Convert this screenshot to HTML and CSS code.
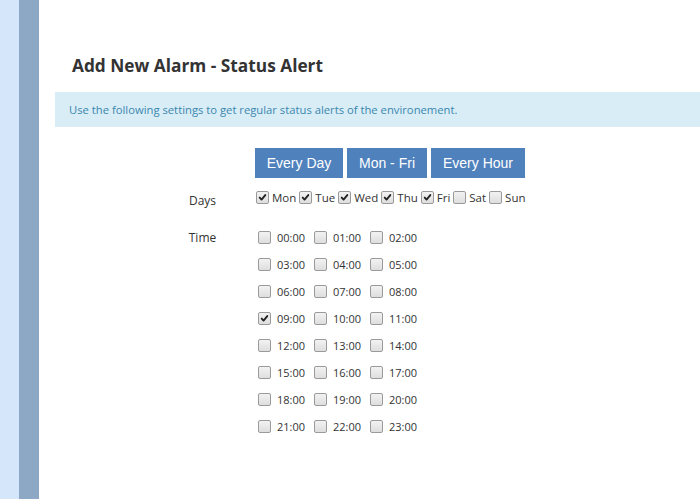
FILE: index.html
```html
<!DOCTYPE html>
<html>
<head>
<meta charset="utf-8">
<link rel="stylesheet" href="styles.css">
</head>
<body>
<div class="page">
  <div class="rail-light"></div>
  <div class="rail-dark"></div>
  <main class="main">
    <h1 class="title">Add New Alarm - Status Alert</h1>
    <div class="info">Use the following settings to get regular status alerts of the environement.</div>
    <div class="form">
      <div class="label"></div>
      <div class="buttons">
        <button class="btn">Every Day</button>
        <button class="btn">Mon - Fri</button>
        <button class="btn">Every Hour</button>
      </div>

      <div class="label label-days">Days</div>
      <div class="days">
        <span class="cb on"><svg viewBox="0 0 13 13"><path d="M3.2 6.6 L5.4 9 L9.8 3.6" /></svg></span><span class="day">Mon</span>
        <span class="cb on"><svg viewBox="0 0 13 13"><path d="M3.2 6.6 L5.4 9 L9.8 3.6" /></svg></span><span class="day">Tue</span>
        <span class="cb on"><svg viewBox="0 0 13 13"><path d="M3.2 6.6 L5.4 9 L9.8 3.6" /></svg></span><span class="day">Wed</span>
        <span class="cb on"><svg viewBox="0 0 13 13"><path d="M3.2 6.6 L5.4 9 L9.8 3.6" /></svg></span><span class="day">Thu</span>
        <span class="cb on"><svg viewBox="0 0 13 13"><path d="M3.2 6.6 L5.4 9 L9.8 3.6" /></svg></span><span class="day">Fri</span>
        <span class="cb"></span><span class="day">Sat</span>
        <span class="cb"></span><span class="day">Sun</span>
      </div>

      <div class="label label-time">Time</div>
      <div class="times">
        <div class="t"><span class="cb"></span><span class="hr">00:00</span></div>
        <div class="t"><span class="cb"></span><span class="hr">01:00</span></div>
        <div class="t"><span class="cb"></span><span class="hr">02:00</span></div>
        <div class="t"><span class="cb"></span><span class="hr">03:00</span></div>
        <div class="t"><span class="cb"></span><span class="hr">04:00</span></div>
        <div class="t"><span class="cb"></span><span class="hr">05:00</span></div>
        <div class="t"><span class="cb"></span><span class="hr">06:00</span></div>
        <div class="t"><span class="cb"></span><span class="hr">07:00</span></div>
        <div class="t"><span class="cb"></span><span class="hr">08:00</span></div>
        <div class="t"><span class="cb on"><svg viewBox="0 0 13 13"><path d="M3.2 6.6 L5.4 9 L9.8 3.6" /></svg></span><span class="hr">09:00</span></div>
        <div class="t"><span class="cb"></span><span class="hr">10:00</span></div>
        <div class="t"><span class="cb"></span><span class="hr">11:00</span></div>
        <div class="t"><span class="cb"></span><span class="hr">12:00</span></div>
        <div class="t"><span class="cb"></span><span class="hr">13:00</span></div>
        <div class="t"><span class="cb"></span><span class="hr">14:00</span></div>
        <div class="t"><span class="cb"></span><span class="hr">15:00</span></div>
        <div class="t"><span class="cb"></span><span class="hr">16:00</span></div>
        <div class="t"><span class="cb"></span><span class="hr">17:00</span></div>
        <div class="t"><span class="cb"></span><span class="hr">18:00</span></div>
        <div class="t"><span class="cb"></span><span class="hr">19:00</span></div>
        <div class="t"><span class="cb"></span><span class="hr">20:00</span></div>
        <div class="t"><span class="cb"></span><span class="hr">21:00</span></div>
        <div class="t"><span class="cb"></span><span class="hr">22:00</span></div>
        <div class="t"><span class="cb"></span><span class="hr">23:00</span></div>
      </div>
    </div>
  </main>
</div>
</body>
</html>
```
FILE: styles.css
```css
* { box-sizing: border-box; }
html, body { margin: 0; padding: 0; background: #fff; }
body { font-family: "Open Sans", "Noto Sans", sans-serif; color: #333; }
.page { display: flex; height: 499px; overflow: hidden; }
.rail-light { width: 19px; background: #d5e6fb; flex: none; }
.rail-dark { width: 20px; background: #8da8c5; flex: none; }
.main { flex: 1; padding: 0 0 0 16px; }
.title {
  margin: 53px 0 0 17px;
  font-size: 17.3px;
  font-weight: 700;
  line-height: 26px;
  color: #333;
}
.info {
  margin-top: 13px;
  height: 35px;
  background: #d9edf7;
  color: #3a87ad;
  font-size: 11.25px;
  line-height: 35px;
  padding-left: 14px;
}
.form {
  display: grid;
  grid-template-columns: 200px 1fr;
  margin-top: 21px;
}
.label {
  font-size: 12px;
  text-align: center;
  padding-left: 95px;
  color: #333;
}
.buttons { display: flex; gap: 4px; }
.btn {
  height: 30px;
  border: 0;
  margin: 0;
  background: #4f81bd;
  color: #fff;
  font-family: "Liberation Sans", Arial, sans-serif;
  font-size: 14px;
  padding: 0;
  white-space: nowrap;
}
.btn:nth-child(1) { width: 88px; }
.btn:nth-child(2) { width: 80px; }
.btn:nth-child(3) { width: 94px; }
.label-days { margin-top: 11px; line-height: 18px; padding-top: 3px; }
.days {
  margin-top: 10px;
  display: flex;
  align-items: center;
  font-size: 11.5px;
  height: 18px;
  padding-left: 1px;
}
.day { margin: 0 3px 0 3px; color: #333; }
.cb {
  width: 13px; height: 13px;
  border: 1px solid #9a9a9a;
  border-radius: 2px;
  background: linear-gradient(#f2f2f2, #dedede);
  display: inline-flex;
  flex: none;
}
.cb svg { width: 11px; height: 11px; }
.cb path { fill: none; stroke: #222; stroke-width: 2.2; stroke-linecap: round; stroke-linejoin: round; }
.label-time { margin-top: 19px; line-height: 18px; }
.times {
  margin-top: 18px;
  display: grid;
  grid-template-columns: repeat(3, 56px);
  grid-auto-rows: 27px;
  padding-left: 3px;
}
.t { display: flex; height: 18px; align-items: center; }
.hr { margin-left: 6px; font-size: 11px; color: #333; }
```
